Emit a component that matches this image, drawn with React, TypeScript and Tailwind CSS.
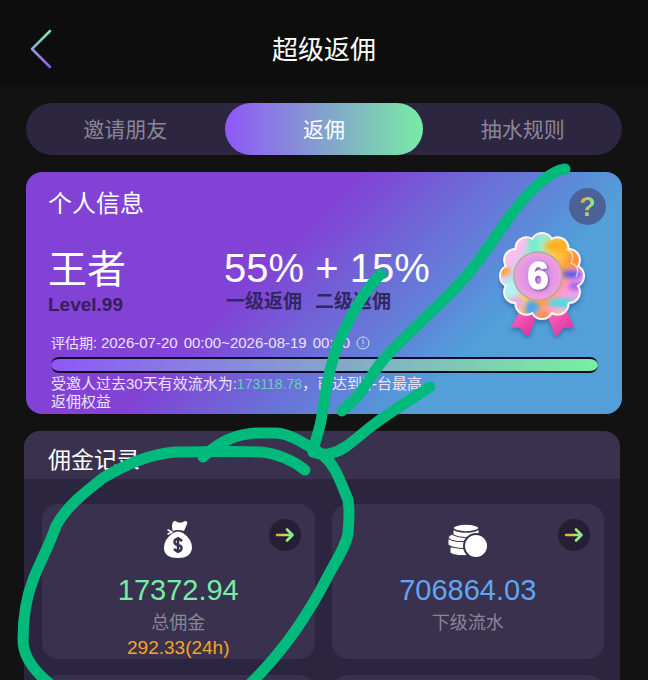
import React from "react";

const petals = Array.from({ length: 12 }, (_, i) => {
  const a = (i * Math.PI) / 6;
  return { x: 44 + 31 * Math.sin(a), y: 47 - 32 * Math.cos(a) };
});

function Medal() {
  return (
    <svg className="mt-1 h-[110px] w-[90px] shrink-0" viewBox="0 0 90 110" role="img" aria-label="6">
      <defs>
        <linearGradient id="ribbon" x1="0" y1="0" x2="1" y2="1">
          <stop offset="0" stopColor="#ff66c0" />
          <stop offset="1" stopColor="#d92a96" />
        </linearGradient>
        <linearGradient id="foil" x1="0" y1="0.1" x2="1" y2="0.8">
          <stop offset="0" stopColor="#ffd0ea" />
          <stop offset="0.22" stopColor="#f9bdf0" />
          <stop offset="0.34" stopColor="#8ff0d8" />
          <stop offset="0.5" stopColor="#ffd34e" />
          <stop offset="0.64" stopColor="#ff9f3e" />
          <stop offset="0.76" stopColor="#ff9ad8" />
          <stop offset="1" stopColor="#c5b6ff" />
        </linearGradient>
        <radialGradient id="core">
          <stop offset="0" stopColor="#c08cf0" />
          <stop offset="0.6" stopColor="#e094e6" />
          <stop offset="1" stopColor="#f2a2dc" />
        </radialGradient>
        <clipPath id="flower">
          <circle cx="44" cy="47" r="32" />
          {petals.map((p, i) => (
            <circle key={i} cx={p.x} cy={p.y} r="10" />
          ))}
        </clipPath>
        <filter id="soft" x="-30%" y="-30%" width="160%" height="160%">
          <feGaussianBlur stdDeviation="2.500" />
        </filter>
        <filter id="shade" x="-20%" y="-20%" width="140%" height="150%">
          <feDropShadow dx="0" dy="3" stdDeviation="2" floodColor="#1c3f80" floodOpacity="0.5" />
        </filter>
      </defs>
      <g filter="url(#shade)">
        <path d="M21 84 L13 98 L22 99 L30 108 L38 88 Z" fill="url(#ribbon)" />
        <path d="M50 88 L58 108 L65 99 L76 98 L69 82 Z" fill="url(#ribbon)" />
        <circle cx="44" cy="47" r="33" fill="#fff4fb" />
        {petals.map((p, i) => (
          <circle key={i} cx={p.x} cy={p.y} r="12" fill="#fff4fb" />
        ))}
      </g>
      <g clipPath="url(#flower)">
        <rect width="90" height="94" fill="url(#foil)" />
        <g filter="url(#soft)">
          <ellipse cx="35" cy="13" rx="5" ry="13" fill="#6ff0c8" />
          <ellipse cx="62" cy="17" rx="15" ry="7" fill="#ffb020" />
          <ellipse cx="77" cy="33" rx="6" ry="9" fill="#ff9230" />
          <ellipse cx="74" cy="45" rx="10" ry="4" fill="#4a54f5" />
          <ellipse cx="78" cy="57" rx="8" ry="4" fill="#a55cf0" />
          <ellipse cx="64" cy="74" rx="14" ry="4" fill="#36e6e4" />
          <ellipse cx="5" cy="42" rx="7" ry="5" fill="#ffa020" />
          <ellipse cx="12" cy="59" rx="10" ry="9" fill="#b5f0f7" />
          <ellipse cx="34" cy="80" rx="7" ry="9" fill="#3fa8f5" />
          <ellipse cx="19" cy="74" rx="7" ry="7" fill="#eda8f2" />
          <ellipse cx="44" cy="87" rx="8" ry="5" fill="#ff943a" />
          <ellipse cx="63" cy="85" rx="8" ry="3" fill="#ffd95a" />
        </g>
        <path d="M68 20 Q78 24 73 34 Q83 38 78 48" fill="none" stroke="#fff" strokeOpacity="0.6" strokeWidth="1.500" />
      </g>
      <circle cx="40" cy="47" r="24" fill="url(#core)" stroke="#b3a7a9" strokeWidth="1.500" />
      <text
        x="40"
        y="60"
        textAnchor="middle"
        className="font-['Liberation_Sans',sans-serif] text-[38px] font-bold drop-shadow-[1px_1px_1px_#76509f]"
        fill="#fff"
        stroke="#fff"
        strokeWidth="1.500"
        strokeLinejoin="round"
      >
        6
      </text>
    </svg>
  );
}

function MoneyBag() {
  return (
    <svg className="h-10 w-[30px] shrink-0" viewBox="0 0 30 40" fill="#fff" aria-hidden="true">
      <path d="M10 2 Q12 0 14 2 Q18 4 22 1 Q25 1 24 4 L21 11 Q15 9 10 11 Q8 6 10 2 Z" />
      <path d="M9 12 L5 10 M9 12 L5 14" stroke="#fff" strokeWidth="1.500" strokeLinecap="round" />
      <path d="M10 13 Q15 10 20 13 Q29 19 29 28 Q28 38 15 38 Q1 38 1 28 Q1 19 10 13 Z" />
      <path
        d="M19 21 Q15 17 12 20 Q10 24 15 25 Q20 26 18 30 Q15 33 11 29 M15 17 V33"
        fill="none"
        stroke="#39314e"
        strokeWidth="2.500"
      />
    </svg>
  );
}

function Coins() {
  return (
    <svg className="size-10 shrink-0" viewBox="0 0 40 40" fill="#fff" stroke="#39314e" aria-hidden="true">
      <path d="M2 27 V33 Q8 37 24 35 V27 Z" />
      <path d="M0 19 V25 Q8 30 26 28 V17 Z" />
      <path d="M0 18 Q1 14 6 14 H26 V20 Q6 24 0 18 Z" />
      <path d="M5 8 V15 Q17 20 31 15 V8 Z" />
      <ellipse cx="18" cy="8" rx="13" ry="4" strokeWidth="1.500" />
      <circle cx="28" cy="26" r="12" strokeWidth="2" />
    </svg>
  );
}

function ArrowButton({ label }: { label: string }) {
  return (
    <button aria-label={label} className="absolute top-[15px] right-3.5 grid size-8 place-items-center rounded-full bg-[#241f34]">
      <svg className="size-5" viewBox="0 0 20 20" fill="none" strokeWidth="2.600" strokeLinecap="round" strokeLinejoin="round">
        <defs>
          <linearGradient id="arrow" gradientUnits="userSpaceOnUse" x1="1" y1="0" x2="18" y2="0">
            <stop offset="0" stopColor="#f5a524" />
            <stop offset="0.6" stopColor="#b6e070" />
            <stop offset="1" stopColor="#78f0a0" />
          </linearGradient>
        </defs>
        <path d="M2 10 H17 M12 4.500 L17.500 10 L12 15.500" stroke="url(#arrow)" />
      </svg>
    </button>
  );
}

type TileProps = {
  icon: React.ReactNode;
  value: string;
  label: string;
  valueClass: string;
  extra?: string;
};

function Tile({ icon, value, label, valueClass, extra }: TileProps) {
  return (
    <div className="relative flex h-[155px] flex-col items-center rounded-2xl bg-[#39314e] pt-4">
      {icon}
      <ArrowButton label={label} />
      <div className={"mt-3 text-[29px] leading-9 " + valueClass}>{value}</div>
      <div className="mt-0.5 text-lg leading-[26px] text-[#8b8598]">{label}</div>
      {extra && <div className="text-[19px] leading-6 text-[#f5a524]">{extra}</div>}
    </div>
  );
}

function Scribble() {
  return (
    <svg
      className="pointer-events-none absolute top-0 left-0 h-[680px] w-[648px]"
      viewBox="0 0 648 680"
      fill="none"
      stroke="#00ba7c"
      strokeWidth="11"
      strokeLinecap="round"
      strokeLinejoin="round"
      aria-hidden="true"
    >
      <path d="M565 169 C556 170 548 176 542 181 C532 190 524 198 517 207 C502 226 490 246 476 264 C458 289 438 304 418 325 C403 339 391 350 380 364 C370 377 362 393 353 401 L342 411" />
      <path d="M381 274 C364 290 350 318 342 335 C330 360 326 390 322 415 C320 430 315 440 313 452" />
      <path d="M430 387 C410 400 390 412 373 425 C355 439 345 450 332 453 C325 455 318 454 313 452" />
      <path d="M305 470 C294 461 277 453 260 452 C230 451 200 452 175 452 C150 454 128 463 103 478 C85 492 65 508 56 526 C49 546 40 562 33 580 C26 598 23 620 23 640 C23 656 34 671 50 684" />
      <path d="M203 457 C222 439 239 434 256 433 H276 C292 434 306 445 320 453 C334 462 340 480 348 500 C350 511 349 522 348 533 C346 547 335 562 328 576 C309 613 282 653 250 684" />
    </svg>
  );
}

export default function App() {
  return (
    <div className="relative h-screen overflow-hidden bg-[#121212] font-['Liberation_Sans','Noto_Sans_CJK_SC',sans-serif] text-white">
      <header className="grid h-[85px] grid-cols-[80px_1fr_80px] items-center bg-[#0d0d0d] pt-3">
        <button aria-label="返回" className="pl-7">
          <svg className="h-10 w-6" viewBox="0 0 24 40" fill="none" strokeWidth="2.500" strokeLinecap="round" strokeLinejoin="round">
            <defs>
              <linearGradient id="back" x1="0" y1="0" x2="0" y2="1">
                <stop offset="0" stopColor="#78f0a0" />
                <stop offset="0.5" stopColor="#8ea3dc" />
                <stop offset="1" stopColor="#9457f5" />
              </linearGradient>
            </defs>
            <path d="M22 2 L4 20 L22 38" stroke="url(#back)" />
          </svg>
        </button>
        <h1 className="pt-0.5 text-center text-[26px] leading-9">超级返佣</h1>
      </header>

      <main className="px-[26px] pt-[18px]">
        <nav className="grid h-[52px] grid-cols-3 rounded-full bg-[#2d2640] text-[21px] text-[#8b8598]">
          <button className="pt-0.5">邀请朋友</button>
          <button className="rounded-full bg-[linear-gradient(90deg,#8f57f7,#78eca4)] pt-0.5 text-white">返佣</button>
          <button className="pt-0.5">抽水规则</button>
        </nav>

        <section className="mt-[17px] rounded-2xl bg-[linear-gradient(135deg,#8242d6_40%,#529fd9_74%)] pt-4 pr-4 pb-[3px] pl-[22px]">
          <div className="flex items-start justify-between">
            <h2 className="text-2xl leading-8">个人信息</h2>
            <button aria-label="帮助" className="grid size-[37px] place-items-center rounded-full bg-[#4c6197]">
              <span className="bg-[linear-gradient(90deg,#f5a524,#78f0a0)] bg-clip-text text-[27px] leading-8 font-bold text-transparent">?</span>
            </button>
          </div>
          <div className="flex h-[104px] justify-between pr-[18px]">
            <div className="w-44 pt-5">
              <div className="text-[39px] leading-[50px]">王者</div>
              <div className="text-[19px] leading-5 font-bold text-[#371d5a]">Level.99</div>
            </div>
            <div className="flex-1 pt-[19px]">
              <div className="text-[40px] leading-[48px]">55% + 15%</div>
              <div className="flex gap-[13px] pl-0.5 text-[19px] leading-5 font-bold text-[#33255f]">
                <span>一级返佣</span>
                <span>二级返佣</span>
              </div>
            </div>
            <Medal />
          </div>
          <div className="pr-2 pl-[3px] text-[#ece2fb]">
            <div className="flex h-7 items-center gap-1.5 text-[15px]">
              <span className="-mr-0.5 text-sm">评估期:</span>
              <span>2026-07-20</span>
              <span>00:00~2026-08-19</span>
              <span>00:00</span>
              <svg className="size-3.5" viewBox="0 0 14 14" fill="none" stroke="#d9dcf5" aria-hidden="true">
                <circle cx="7" cy="7" r="6" />
                <path d="M7 3.500 V8 M7 9.500 V10.500" />
              </svg>
            </div>
            <div className="h-4 rounded-full border-y-2 border-[#120c26] bg-[linear-gradient(90deg,#8f57f7,#78f0a0)]" />
            <p className="mt-0.5 max-w-[376px] text-[15px] leading-[18px]">
              受邀人过去30天有效流水为:
              <span className="inline-block text-sm leading-[18px] text-[#66cfc0]">173118.78</span>
              ，已达到平台最高返佣权益
            </p>
          </div>
        </section>
      </main>

      <section className="mt-[17px] mr-7 ml-6 overflow-hidden rounded-2xl bg-[#2c2540]">
        <h2 className="h-12 bg-[#39314e] px-6 pt-[11px] text-[23px] leading-9">佣金记录</h2>
        <div className="grid grid-cols-2 gap-x-[17px] gap-y-4 pt-[25px] pr-4 pb-4 pl-[18px]">
          <Tile icon={<MoneyBag />} value="17372.94" label="总佣金" valueClass="text-[#78eca4]" extra="292.33(24h)" />
          <Tile icon={<Coins />} value="706864.03" label="下级流水" valueClass="text-[#62a5f5]" />
          <div className="h-[155px] rounded-2xl bg-[#39314e]" />
          <div className="h-[155px] rounded-2xl bg-[#39314e]" />
        </div>
      </section>

      <Scribble />
    </div>
  );
}
